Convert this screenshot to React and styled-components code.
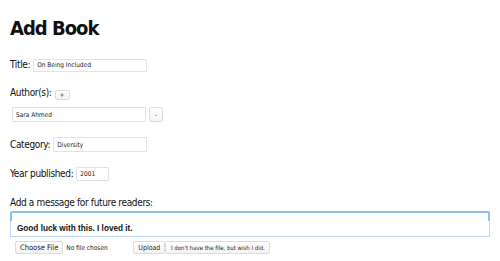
import React from 'react';
import styled, { createGlobalStyle } from 'styled-components';

const GlobalStyle = createGlobalStyle`
  html, body {
    margin: 0;
    padding: 0;
    background: #fff;
  }
  body {
    font-family: "DejaVu Sans Condensed", "DejaVu Sans", sans-serif;
    font-stretch: condensed;
    color: #111;
  }
`;

const Page = styled.main`
  position: relative;
  width: 500px;
  height: 261px;
  padding: 0 10px;
  box-sizing: border-box;
  overflow: hidden;
`;

const Heading = styled.h1`
  margin: 0;
  padding-top: 15px;
  font-size: 20px;
  line-height: 26px;
  font-weight: 700;
  letter-spacing: -1px;
`;

const Row = styled.div`
  display: flex;
  align-items: ${(p) => p.align || 'center'};
  gap: ${(p) => p.gap || 3}px;
  margin-top: ${(p) => p.top || 0}px;
  padding-left: ${(p) => p.indent || 0}px;
`;

const Label = styled.label`
  font-size: 10px;
  line-height: 14px;
  letter-spacing: -0.35px;
  color: #111;
`;

const TextInput = styled.input`
  box-sizing: border-box;
  width: ${(p) => p.w}px;
  height: ${(p) => p.h || 13}px;
  border: 1px solid #e2e2e2;
  border-radius: 1px;
  padding: 0 3px;
  font-family: "DejaVu Sans Condensed", "DejaVu Sans", sans-serif;
  font-stretch: condensed;
  font-size: 6.5px;
  color: #222;
  background: #fff;
  outline: none;
`;

const SmallButton = styled.button`
  box-sizing: border-box;
  height: ${(p) => p.h || 13}px;
  min-width: ${(p) => p.w || 14}px;
  padding: 0 4px;
  border: 1px solid #dcdcdc;
  border-radius: 2px;
  background: linear-gradient(#fff, #f3f3f3);
  font-family: "DejaVu Sans Condensed", "DejaVu Sans", sans-serif;
  font-stretch: condensed;
  font-size: ${(p) => p.fs || 6}px;
  color: #222;
`;

const MessageBlock = styled.div`
  position: relative;
  margin-top: 10px;
`;

const MessageInput = styled.input`
  display: block;
  box-sizing: border-box;
  width: 480px;
  height: 15px;
  margin-top: 1px;
  border: 2px solid #8ec0f4;
  border-radius: 2px;
  background: #fff;
  outline: none;
`;

const Suggestions = styled.ul`
  position: absolute;
  left: 0;
  top: 30px;
  z-index: 2;
  width: 480px;
  height: 16px;
  box-sizing: border-box;
  margin: 0;
  padding: 0 0 0 6px;
  list-style: none;
  border: 1px solid #bcd8f5;
  border-top: none;
  background: #fff;
  display: flex;
  align-items: center;
`;

const Suggestion = styled.li`
  font-family: "Liberation Sans", Arial, sans-serif;
  font-weight: 700;
  font-size: 8.2px;
  color: #111;
`;

const FileRow = styled.div`
  display: flex;
  align-items: center;
  margin-top: 15px;
  padding-left: 5px;
`;

const FileName = styled.span`
  font-family: "DejaVu Sans Condensed", "DejaVu Sans", sans-serif;
  font-stretch: condensed;
  font-size: 6.5px;
  color: #222;
  margin-left: 3px;
  width: 67px;
`;

export default function App() {
  return (
    <>
      <GlobalStyle />
      <Page>
        <Heading>Add Book</Heading>

        <Row top={17}>
          <Label htmlFor="title">Title:</Label>
          <TextInput id="title" w={114} defaultValue="On Being Included" />
        </Row>

        <Row top={14} align="flex-end">
          <Label>Author(s):</Label>
          <SmallButton w={15} h={10} fs={6.5}>+</SmallButton>
        </Row>

        <Row top={7} indent={2} gap={3}>
          <TextInput w={134} h={15} defaultValue="Sara Ahmed" />
          <SmallButton w={14} h={15} fs={6.5}>-</SmallButton>
        </Row>

        <Row top={15}>
          <Label htmlFor="category">Category:</Label>
          <TextInput id="category" w={94} h={15} defaultValue="Diversity" />
        </Row>

        <Row top={15}>
          <Label htmlFor="year">Year published:</Label>
          <TextInput id="year" w={33} h={14} defaultValue="2001" />
        </Row>

        <MessageBlock>
          <Label htmlFor="message">Add a message for future readers:</Label>
          <MessageInput id="message" />
          <Suggestions>
            <Suggestion>Good luck with this. I loved it.</Suggestion>
          </Suggestions>
          <FileRow>
            <SmallButton h={13} w={47} fs={7.5}>Choose File</SmallButton>
            <FileName>No file chosen</FileName>
            <SmallButton h={13} w={30} fs={7}>Upload</SmallButton>
            <SmallButton h={13} w={105}>I don't have the file, but wish I did.</SmallButton>
          </FileRow>
        </MessageBlock>
      </Page>
    </>
  );
}
